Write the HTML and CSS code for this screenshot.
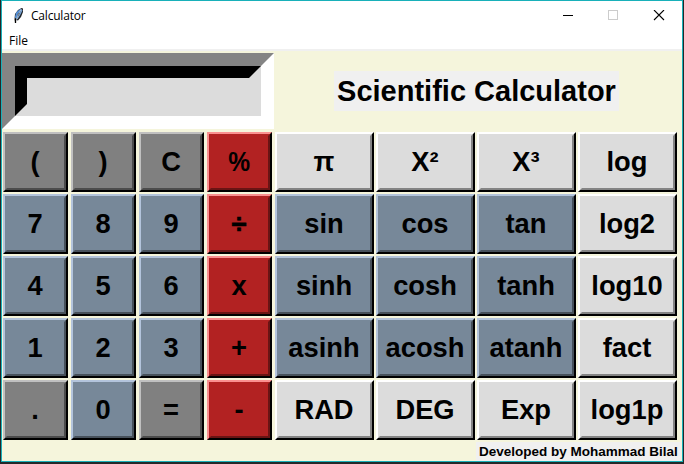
FILE: index.html
```html
<!DOCTYPE html>
<html lang="en">
<head>
<meta charset="utf-8">
<title>Calculator</title>
<link rel="stylesheet" href="styles.css">
</head>
<body>
<div class="window">
  <header class="titlebar">
    <svg class="feather" width="12" height="18" viewBox="0 0 12 18">
      <path d="M9.5 1 L11 1.5 L11 5 L9 10 L6 13.5 L4 13 L3 15 L2.500 12 L3 7 L6 3 Z" fill="#24282c"/>
      <path d="M9 2.500 L5 6 L3.800 11" stroke="#5590d8" stroke-width="2" fill="none"/>
      <path d="M10 3 L7.500 8 L5 12" stroke="#7aa9df" stroke-width="1.200" fill="none"/>
      <path d="M9.500 2 L6 8 L3.500 15" stroke="#cfd8df" stroke-width=".7" fill="none"/>
      <path d="M3.500 12 V16" stroke="#000" stroke-width="1.300"/>
    </svg>
    <h1 class="caption">Calculator</h1>
    <svg class="controls" width="104" height="12" viewBox="0 0 104 12" fill="none" shape-rendering="crispEdges">
      <path d="M0 5.500 H10" stroke="#000"/>
      <rect x="45.500" y=".5" width="9" height="9" stroke="#ccc"/>
      <path d="M91 0 L101 10 M101 0 L91 10" stroke="#000" stroke-width="1.100" shape-rendering="auto"/>
    </svg>
  </header>
  <nav class="menu">File</nav>
  <main class="body">
    <section class="top">
      <div class="display"><div class="screen"></div></div>
      <div class="heading"><span class="title">Scientific Calculator</span></div>
    </section>
    <section class="keys">
      <button class="key gray">(</button><button class="key gray">)</button><button class="key gray">C</button><button class="key red"><span class="narrow">%</span></button><button class="key light">π</button><button class="key light">X²</button><button class="key light">X³</button><button class="key light">log</button>
      <button class="key slate">7</button><button class="key slate">8</button><button class="key slate">9</button><button class="key red"><span class="heavy">÷</span></button><button class="key slate">sin</button><button class="key slate">cos</button><button class="key slate">tan</button><button class="key light">log2</button>
      <button class="key slate">4</button><button class="key slate">5</button><button class="key slate">6</button><button class="key red">x</button><button class="key slate">sinh</button><button class="key slate">cosh</button><button class="key slate">tanh</button><button class="key light">log10</button>
      <button class="key slate">1</button><button class="key slate">2</button><button class="key slate">3</button><button class="key red">+</button><button class="key slate">asinh</button><button class="key slate">acosh</button><button class="key slate">atanh</button><button class="key light">fact</button>
      <button class="key gray">.</button><button class="key slate">0</button><button class="key gray">=</button><button class="key red">-</button><button class="key light">RAD</button><button class="key light">DEG</button><button class="key light">Exp</button><button class="key light">log1p</button>
    </section>
    <footer class="credit"><span class="credit-label">Developed by Mohammad Bilal</span></footer>
  </main>
</div>
</body>
</html>
```
FILE: styles.css
```css
* { box-sizing: border-box; }
body {
  margin: 0;
  width: 684px;
  height: 464px;
  padding: 0 1px 2px;
  overflow: hidden;
  background: #252829;
  font-family: "Liberation Sans", Arial, sans-serif;
  color: #000;
}
.window {
  height: 462px;
  border: 1px solid #18b0b9;
  display: flex;
  flex-direction: column;
  background: #fff;
}
.titlebar {
  height: 30px;
  flex: none;
  display: flex;
  align-items: center;
  padding: 0 15px 0 10px;
}
.feather { flex: none; margin-top: -1px; }
.caption {
  margin: 0 auto 0 7px;
  font: 400 12px/16px "Open Sans", sans-serif;
  letter-spacing: -0.2px;
}
.controls { flex: none; margin-top: 0; }
.menu {
  height: 20px;
  flex: none;
  padding-left: 7px;
  font: 400 12px/20px "Open Sans", sans-serif;
  border-bottom: 2px solid #f0f0f0;
}
.body {
  flex: 1;
  background: #f5f5dc;
  padding-top: 2px;
}
.top { display: flex; height: 79px; }
.display {
  width: 272px;
  height: 76px;
  border: 13px solid;
  border-color: #848484 #fff #fff #848484;
}
.screen {
  height: 50px;
  border: 12px solid;
  border-color: #000 #dcdcdc #dcdcdc #000;
  background: #dcdcdc;
}
.heading {
  flex: 1;
  display: flex;
  justify-content: center;
  align-items: flex-start;
  padding: 18px 3px 0 0;
}
.title {
  width: 285px;
  height: 40px;
  background: #f0f0f0;
  font-size: 29px;
  font-weight: 700;
  line-height: 40px;
  text-align: center;
  white-space: nowrap;
}
.keys {
  display: grid;
  grid-template-columns: repeat(4, 66px) repeat(4, 99px);
  grid-template-rows: repeat(5, 60px);
  gap: 2px;
  margin-left: 1px;
}
.key {
  position: relative;
  margin: 0;
  padding: 0 1px 0 0;
  border: 2px solid;
  border-color: var(--hi) #000 #000 var(--hi);
  background: var(--face);
  color: #000;
  font: 700 27.300px/56px "Liberation Sans", Arial, sans-serif;
  text-align: center;
  white-space: nowrap;
}
.key::after {
  content: "";
  position: absolute;
  inset: 0;
  border: 2px solid;
  border-color: transparent var(--low) var(--low) transparent;
}
.key:nth-child(8n+1), .key:nth-child(8n+2), .key:nth-child(8n+3), .key:nth-child(8n+4) { width: 65px; }
.narrow { display: inline-block; transform: scaleX(.9); }
.heavy { -webkit-text-stroke: .7px #000; }
.gray { --face: #808080; --hi: #c0c0c0; --low: #4c4c4c; }
.slate { --face: #778899; --hi: #b3c4dc; --low: #47515b; }
.red { --face: #b22222; --hi: #fa9090; --low: #6a1414; }
.light { --face: #dcdcdc; --hi: #fff; --low: #848484; }
.credit {
  display: flex;
  justify-content: flex-end;
  padding: 2px 1px 0 0;
}
.credit-label {
  width: 205px;
  height: 19px;
  padding-left: 3px;
  background: #f0f0f0;
  font-size: 13.500px;
  font-weight: 700;
  line-height: 20px;
  white-space: nowrap;
}
```
